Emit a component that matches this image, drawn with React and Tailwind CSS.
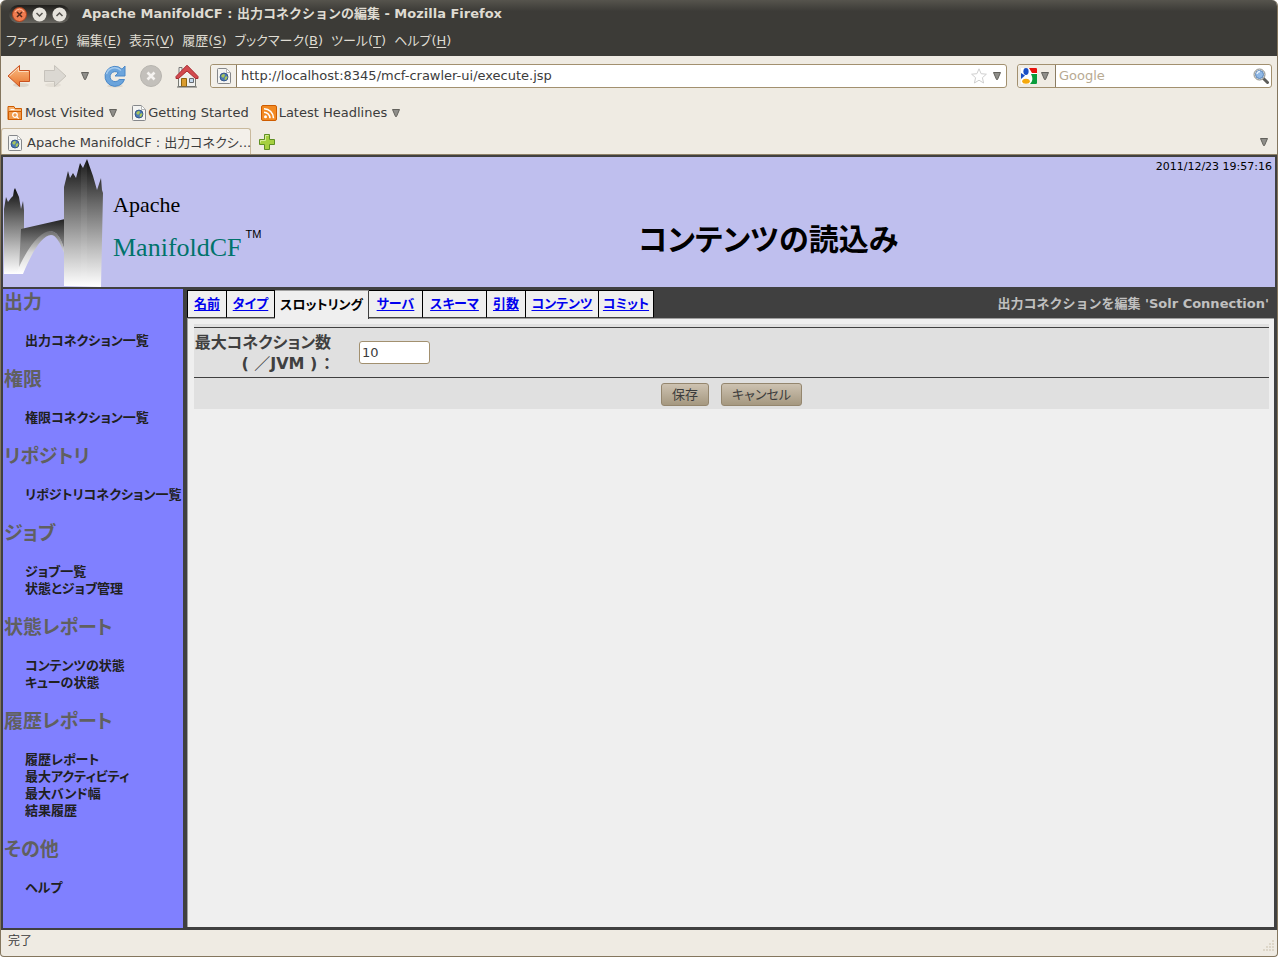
const SANS = "font-['DejaVu_Sans','Noto_Sans_CJK_JP',sans-serif]";

const menus = [
  ["ファイル", "F"],
  ["編集", "E"],
  ["表示", "V"],
  ["履歴", "S"],
  ["ブックマーク", "B"],
  ["ツール", "T"],
  ["ヘルプ", "H"],
];

const tabs = [
  { label: "名前", width: "w-[40px] border-l" },
  { label: "タイプ", width: "w-[48px]" },
  { label: "スロットリング", width: "w-[94px]", active: true },
  { label: "サーバ", width: "w-[54px]" },
  { label: "スキーマ", width: "w-[64px]" },
  { label: "引数", width: "w-[39px]" },
  { label: "コンテンツ", width: "w-[73px]" },
  { label: "コミット", width: "w-[55px]" },
];

const sections = [
  { title: "出力", items: ["出力コネクション一覧"] },
  { title: "権限", items: ["権限コネクション一覧"] },
  { title: "リポジトリ", items: ["リポジトリコネクション一覧"] },
  { title: "ジョブ", items: ["ジョブ一覧", "状態とジョブ管理"] },
  { title: "状態レポート", items: ["コンテンツの状態", "キューの状態"] },
  { title: "履歴レポート", items: ["履歴レポート", "最大アクティビティ", "最大バンド幅", "結果履歴"] },
  { title: "その他", items: ["ヘルプ"] },
];

function Caret() {
  return (
    <svg width="8" height="8" viewBox="0 0 8 8" className="shrink-0">
      <path d="M.5 .5h7L4.500 7.500h-1z" fill="#8f8e8a" stroke="#62615c" strokeWidth="1" />
    </svg>
  );
}

function PageIcon() {
  return (
    <svg width="14" height="16" viewBox="0 0 14 16" className="shrink-0">
      <path d="M1.500.5h8l4 4v10a1 1 0 0 1-1 1h-11a1 1 0 0 1-1-1v-13a1 1 0 0 1 1-1z" fill="#f4f4f2" stroke="#85878a" />
      <path d="M9.500 .5v4h4z" fill="#fff" stroke="#b4b5b4" />
      <circle cx="7" cy="9" r="4" fill="#4a78b4" stroke="#2a4a7c" strokeWidth=".8" />
      <path d="M4 8l2-2 2 .5-.5 2L6 10zM8 9l2-1 .5 1.500L9 12l-1.500-.5z" fill="#a9c65a" />
    </svg>
  );
}

function BackIcon() {
  return (
    <svg width="24" height="24" viewBox="0 0 24 24">
      <defs>
        <linearGradient id="back" x1="0" y1="0" x2="0" y2="1">
          <stop offset="0" stopColor="#fbc08a" />
          <stop offset="1" stopColor="#e8742c" />
        </linearGradient>
      </defs>
      <ellipse cx="14" cy="21" rx="8" ry="2" fill="#dcd5ca" />
      <path d="M1 12L12.500 1.500V6.500H22.500V17.500H12.500V22.500z" fill="url(#back)" stroke="#c9501e" />
      <path d="M2.500 12l9-8.200v3.700h10" fill="none" stroke="#fddcbc" />
    </svg>
  );
}

function ForwardIcon() {
  return (
    <svg width="24" height="24" viewBox="0 0 24 24">
      <ellipse cx="10" cy="21" rx="8" ry="2" fill="#e4dfd6" />
      <path d="M23 12L11.500 1.500V6.500H1.500V17.500H11.500V22.500z" fill="#dbd8d2" stroke="#c6c2bb" />
    </svg>
  );
}

function ReloadIcon() {
  return (
    <svg width="24" height="24" viewBox="0 0 24 24">
      <ellipse cx="12" cy="22" rx="8" ry="1.500" fill="#dcd5ca" />
      <path
        d="M19 5.200l3-3.200v10h-10l3.300-3.200a5 5 0 1 0 .9 6.700h5.300A10 10 0 1 1 19 5.200z"
        fill="#6ba4dc"
        stroke="#4a88c8"
      />
      <path d="M3.500 10a8.500 8.500 0 0 1 14.500-3.500" fill="none" stroke="#a5cbee" strokeWidth="1.500" />
    </svg>
  );
}

function StopIcon() {
  return (
    <svg width="24" height="24" viewBox="0 0 24 24">
      <circle cx="12" cy="12" r="10.500" fill="#c3c0bb" stroke="#b7b4af" />
      <path d="M8.500 8.500l7 7m0-7l-7 7" stroke="#f5f3f0" strokeWidth="2.600" />
    </svg>
  );
}

function HomeIcon() {
  return (
    <svg width="24" height="24" viewBox="0 0 24 24">
      <path d="M4 3.500h3v6H4z" fill="#f2f2f0" stroke="#777" />
      <path d="M3.500 12L12 4l8.500 8v10.500h-17z" fill="#f0f0ee" stroke="#777972" />
      <path d="M1 12.500L12 1.200l11 11.300v2h-2.500L12 7l-8.500 7.500H1z" fill="#d34a4f" stroke="#a82a30" />
      <path d="M6.500 14.500h5v8h-5z" fill="#d99b2e" stroke="#8c6410" />
      <path d="M14.500 14.500h4v4h-4z" fill="#c4d8ec" stroke="#666a70" />
      <path d="M2 23h20" stroke="#6b6b68" />
    </svg>
  );
}

function MostVisitedIcon() {
  return (
    <svg width="16" height="16" viewBox="0 0 16 16" className="shrink-0">
      <path d="M1 14.500V1.500h6l1 2h6.500v11z" fill="#f6b271" stroke="#ce5c00" />
      <path d="M1.500 6.500h13v8h-13z" fill="#f29a4a" stroke="#ce5c00" />
      <circle cx="8" cy="10" r="2.300" fill="none" stroke="#fff" strokeWidth="1.200" />
      <path d="M9.800 11.800l1.800 1.800M3.500 4.500h4" stroke="#fff" strokeWidth="1.200" />
    </svg>
  );
}

function FeedIcon() {
  return (
    <svg width="16" height="16" viewBox="0 0 16 16" className="shrink-0">
      <rect x=".5" y=".5" width="15" height="15" rx="1.500" fill="#f28a22" stroke="#ce5c00" />
      <circle cx="4.500" cy="11.700" r="1.500" fill="#fff" />
      <path d="M3 7.200a6 6 0 0 1 6 6M3 3.700a9.500 9.500 0 0 1 9.500 9.500" fill="none" stroke="#fff" strokeWidth="1.600" />
    </svg>
  );
}

function PlusIcon() {
  return (
    <svg width="16" height="16" viewBox="0 0 16 16">
      <path d="M5.500.5h5v5h5v5h-5v5h-5v-5h-5v-5h5z" fill="#a5cf3f" stroke="#5f8f22" />
      <path d="M6.500 6.500v-5h3M1.500 8.500v-2h5" fill="none" stroke="#d8ec9a" />
    </svg>
  );
}

function GoogleIcon() {
  return (
    <svg width="16" height="16" viewBox="0 0 16 16" className="shrink-0">
      <rect width="16" height="16" fill="#fff" />
      <path d="M8 0h7a1 1 0 0 1 1 1v4h-5z" fill="#e8120c" />
      <path d="M10 6h6v9a1 1 0 0 1-1 1H9c3-3 3-6 1-10z" fill="#0a9d3c" />
      <path d="M0 5l4 2.500L0 11z" fill="#1a4fc4" />
      <ellipse cx="5" cy="3.500" rx="2.600" ry="3.400" fill="#1a4fc4" />
      <ellipse cx="5" cy="13.300" rx="3.800" ry="2.500" fill="#f5a80c" />
    </svg>
  );
}

function SearchIcon() {
  return (
    <svg width="16" height="16" viewBox="0 0 16 16">
      <path d="M10 10l4.500 4.500" stroke="#5c5c5a" strokeWidth="3" strokeLinecap="round" />
      <circle cx="6.500" cy="6.500" r="5.500" fill="#e8e8e6" stroke="#8a8c88" />
      <circle cx="6.500" cy="6.500" r="4" fill="#8fb8e6" stroke="#5c86b8" />
      <path d="M4 6a3 3 0 0 1 3-2.500" fill="none" stroke="#e6f1fc" strokeWidth="1.500" />
    </svg>
  );
}

function StarIcon() {
  return (
    <svg width="16" height="16" viewBox="0 0 16 16">
      <path d="M8 .8l2.100 4.900 5.300.5-4 3.500 1.200 5.300L8 12.200 3.400 15l1.200-5.300-4-3.500 5.300-.5z" fill="#fff" stroke="#cfcfcf" />
    </svg>
  );
}

function WindowButtons() {
  return (
    <div className="flex h-[18px] items-center gap-[5px] rounded-full bg-gradient-to-b from-[#1f1e1b] to-[#6a6862] px-[3px]">
      <button aria-label="閉じる">
        <svg width="15" height="15" viewBox="0 0 15 15" className="block">
          <circle cx="7.500" cy="7.500" r="7" fill="#f07c50" stroke="#a8421e" />
          <path d="M3 5a5 5 0 0 1 9 0" stroke="#fbb695" fill="none" />
          <path d="M5 5l5 5m0-5l-5 5" stroke="#55291a" strokeWidth="1.500" />
        </svg>
      </button>
      <button aria-label="最小化">
        <svg width="15" height="15" viewBox="0 0 15 15" className="block">
          <circle cx="7.500" cy="7.500" r="7" fill="#e6e3dc" />
          <path d="M4.500 6l3 3 3-3" stroke="#55534e" strokeWidth="1.500" fill="none" />
        </svg>
      </button>
      <button aria-label="最大化">
        <svg width="15" height="15" viewBox="0 0 15 15" className="block">
          <circle cx="7.500" cy="7.500" r="7" fill="#e6e3dc" />
          <path d="M4.500 9l3-3 3 3" stroke="#55534e" strokeWidth="1.500" fill="none" />
        </svg>
      </button>
    </div>
  );
}

function BridgeLogo() {
  return (
    <svg width="100" height="130" viewBox="0 0 100 130" className="shrink-0">
      <defs>
        <linearGradient id="tower" x1="0" y1="0" x2="0" y2="1">
          <stop offset="0" stopColor="#0c0c0c" />
          <stop offset=".35" stopColor="#6a6a6a" />
          <stop offset=".7" stopColor="#bdbdbd" />
          <stop offset="1" stopColor="#fff" />
        </linearGradient>
        <linearGradient id="arch" x1="0" y1="0" x2="0" y2="1">
          <stop offset="0" stopColor="#222" />
          <stop offset=".5" stopColor="#808080" />
          <stop offset="1" stopColor="#b5b5b5" />
        </linearGradient>
        <linearGradient id="vault" x1="0" y1="0" x2="0" y2="1">
          <stop offset="0" stopColor="#6c6c6c" />
          <stop offset=".5" stopColor="#d8d8d8" />
          <stop offset="1" stopColor="#fff" />
        </linearGradient>
      </defs>
      <path d="M1 117V52l2-12 2 5 3-4 2-2 1-6 1-2 4 9 2 12 2-8 1 9v19l-4 45z" fill="url(#tower)" />
      <path d="M18 72L62 62V94C55 72 49 73 43 76 32 82 24 96 16 112z" fill="url(#arch)" />
      <path d="M13 117C24 90 38 74 47 74c9 0 14 14 15 24-5-13-9-20-14-20-10 0-21 22-28 39z" fill="url(#vault)" />
      <path d="M61 129V30l4-16 2 7 3-5 3 5 4-15 3 5 4-9 6 17 4 14 4-12 1 12 1 3-2 94z" fill="url(#tower)" />
      <path d="M78 6l3 3 3-7v127h-6z" fill="#fff" fillOpacity=".06" />
    </svg>
  );
}

function TitleBar() {
  return (
    <header className="bg-gradient-to-b from-[#56544d] via-[#3c3b37] via-20% to-[#3c3b37] text-[13px] text-[#dfdbd2]">
      <div className="flex h-7 items-center gap-3 pl-2">
        <WindowButtons />
        <div className="font-bold [font-feature-settings:normal]">
          Apache ManifoldCF : 出力コネクションの編集 - Mozilla Firefox
        </div>
      </div>
      <nav className="flex h-7 items-center gap-2 pl-[5px]">
        {menus.map(([label, key]) => (
          <button key={key} className="pb-[2px]">
            {label}(<span className="underline underline-offset-2">{key}</span>)
          </button>
        ))}
      </nav>
    </header>
  );
}

function Toolbar() {
  return (
    <div className="flex h-10 items-center pr-[5px] pl-[6px]">
      <button aria-label="戻る"><BackIcon /></button>
      <button aria-label="進む" className="ml-3"><ForwardIcon /></button>
      <button aria-label="履歴を表示" className="ml-[14px]"><Caret /></button>
      <button aria-label="再読み込み" className="ml-[14px]"><ReloadIcon /></button>
      <button aria-label="中止" className="ml-3"><StopIcon /></button>
      <button aria-label="ホーム" className="ml-3"><HomeIcon /></button>
      <div className="ml-[11px] flex h-6 flex-1 items-center rounded-[3px] border border-[#a2906f] bg-white pr-[5px]">
        <div className="flex h-[22px] items-center rounded-l-[3px] border-r border-[#8b7c62] bg-[#f3f0ea] pr-[5px] pl-[6px]"><PageIcon /></div>
        <input
          aria-label="URL"
          defaultValue="http://localhost:8345/mcf-crawler-ui/execute.jsp"
          className="min-w-0 flex-1 bg-transparent pl-1 text-[13px] text-[#3c3c3c] outline-none"
        />
        <button aria-label="ブックマークに追加" className="mr-[6px]"><StarIcon /></button>
        <button aria-label="URL履歴"><Caret /></button>
      </div>
      <div className="ml-[10px] flex h-6 w-[255px] items-center rounded-[3px] border border-[#a2906f] bg-white pr-[2px]">
        <button aria-label="検索エンジン" className="flex h-[22px] items-center gap-1 rounded-l-[3px] border-r border-[#8b7c62] bg-[#f0ece4] pr-[6px] pl-[3px]">
          <GoogleIcon />
          <Caret />
        </button>
        <input
          aria-label="検索"
          placeholder="Google"
          className="min-w-0 flex-1 bg-transparent pl-[3px] text-[13px] outline-none placeholder:text-[#b8aa92]"
        />
        <button aria-label="検索する"><SearchIcon /></button>
      </div>
    </div>
  );
}

function Bookmarks() {
  return (
    <div className="flex h-8 items-center gap-3 pt-px pl-[6px] text-[13px]">
      <button className="flex items-center gap-[2px]">
        <MostVisitedIcon />
        <span className="pr-[3px]">Most Visited</span>
        <Caret />
      </button>
      <a href="#start" className="ml-[3px] flex items-center gap-[2px]"><PageIcon />Getting Started</a>
      <button className="flex items-center gap-[2px]">
        <FeedIcon />
        <span className="pr-[3px]">Latest Headlines</span>
        <Caret />
      </button>
    </div>
  );
}

function TabStrip() {
  return (
    <div className="flex h-[27px] items-end border-b border-[#8f8268]">
      <button className="flex h-[26px] w-[250px] items-center gap-[5px] rounded-t-[3px] border border-b-0 border-[#c9b99c] bg-[#f3f0ea] pt-[2px] pl-[6px] text-[13px] whitespace-nowrap">
        <PageIcon />
        <span>Apache ManifoldCF : 出力コネクシ...</span>
      </button>
      <button aria-label="新しいタブ" className="mb-1 ml-2"><PlusIcon /></button>
      <button aria-label="タブの一覧" className="mr-[9px] mb-2 ml-auto"><Caret /></button>
    </div>
  );
}

function PageHeader() {
  return (
    <div className="flex h-[130px] bg-[#bfbfee] text-black">
      <div className="flex">
        <BridgeLogo />
        <div className="pt-8 pl-[10px] font-['Liberation_Serif',serif] whitespace-nowrap">
          <div className="text-[22px] leading-8">Apache</div>
          <div className="flex items-start text-[26px] leading-[54px] text-[#00736b]">
            ManifoldCF
            <span className="pl-1 font-['Liberation_Sans',sans-serif] text-[11px] leading-[26px] text-black">TM</span>
          </div>
        </div>
      </div>
      <div className="flex-1">
        <div className="pt-[2px] pr-[3px] text-right text-[11px] leading-4">2011/12/23 19:57:16</div>
        <h1 className="pt-[47px] text-center text-[30px] leading-9 font-bold">コンテンツの読込み</h1>
      </div>
    </div>
  );
}

function Sidebar() {
  return (
    <nav className="w-[180px] shrink-0 bg-[#8080ff] pt-px font-bold whitespace-nowrap">
      {sections.map((section) => (
        <section key={section.title}>
          <h2 className="h-6 pl-px text-[19px] leading-6 text-[#606060]">{section.title}</h2>
          <ul className="my-[18px] pl-[22px] text-[13px] leading-[17px] text-[#202020]">
            {section.items.map((item) => (
              <li key={item}><a href="#nav">{item}</a></li>
            ))}
          </ul>
        </section>
      ))}
    </nav>
  );
}

function EditTabs() {
  return (
    <div className="flex h-[29px] items-stretch border-b border-[#a0a0a0] text-[13px] font-bold whitespace-nowrap">
      {tabs.map((tab) =>
        tab.active ? (
          <div key={tab.label} className={`${tab.width} -mb-px flex items-center justify-center border-t border-r border-t-[#a0a0a0] border-r-[#404040] bg-[#efefef] text-black`}>
            {tab.label}
          </div>
        ) : (
          <div key={tab.label} className={`${tab.width} flex items-center justify-center border-t border-r border-b border-black border-b-[#404040] bg-[#efefef]`}>
            <a href="#tab" className="text-[#0000ee] underline underline-offset-2">{tab.label}</a>
          </div>
        )
      )}
      <div className="ml-auto flex items-center pr-[5px] text-[#c0c0c0] [font-feature-settings:normal]">
        出力コネクションを編集 'Solr Connection'
      </div>
    </div>
  );
}

const BUTTON =
  "h-[23px] rounded-[3px] border border-[#94866e] bg-gradient-to-b from-[#cdc2b1] to-[#a59880] px-[10px] text-[13px] leading-5 text-[#3c3c3c]";

function EditForm() {
  return (
    <form className="m-[6px] mt-[5px] mr-[5px] bg-[#e0e0e0] pt-[3px]" onSubmit={(e) => e.preventDefault()}>
      <div className="flex h-[51px] items-center border-y border-[#404040]">
        <label htmlFor="max-connections" className="w-[137px] text-right text-[16px] leading-[21px] font-bold whitespace-nowrap text-[#404040]">
          最大コネクション数
          <br />
          ( ／JVM ) ：
        </label>
        <input
          id="max-connections"
          defaultValue="10"
          className="ml-7 h-[23px] w-[71px] rounded-[3px] border border-[#a2906f] bg-white px-[2px] text-[13px] text-[#3c3c3c]"
        />
      </div>
      <div className="flex h-[31px] items-center justify-center gap-3 pt-1 pb-[2px]">
        <button className={BUTTON}>保存</button>
        <button className={BUTTON}>キャンセル</button>
      </div>
    </form>
  );
}

function StatusBar() {
  return (
    <footer className="flex h-[26px] items-end justify-between pr-[2px] pl-[7px] text-[12px]">
      <span className="h-full leading-[22px]">完了</span>
      <svg width="12" height="12" viewBox="0 0 12 12" className="mb-1">
        <path d="M9 0h2v2H9zM6 3h2v2H6zM9 3h2v2H9zM3 6h2v2H3zM6 6h2v2H6zM9 6h2v2H9zM0 9h2v2H0zM3 9h2v2H3zM6 9h2v2H6zM9 9h2v2H9z" fill="#ddd6c8" />
      </svg>
    </footer>
  );
}

export default function App() {
  return (
    <div className={`${SANS} flex min-h-screen flex-col overflow-hidden rounded-t-md rounded-b-sm border-x border-b border-[#84765e] bg-[#efebe3] text-[#3c3c3c] [font-feature-settings:'palt']`}>
      <TitleBar />
      <Toolbar />
      <Bookmarks />
      <TabStrip />
      <main className="flex flex-1 flex-col gap-[2px] border-2 border-[#404040] bg-[#404040]">
        <PageHeader />
        <div className="flex flex-1">
          <Sidebar />
          <div className="flex flex-1 flex-col pt-px pr-px pb-px pl-1">
            <EditTabs />
            <div className="flex-1 border-l border-[#a0a0a0] bg-[#efefef]">
              <EditForm />
            </div>
          </div>
        </div>
      </main>
      <StatusBar />
    </div>
  );
}
